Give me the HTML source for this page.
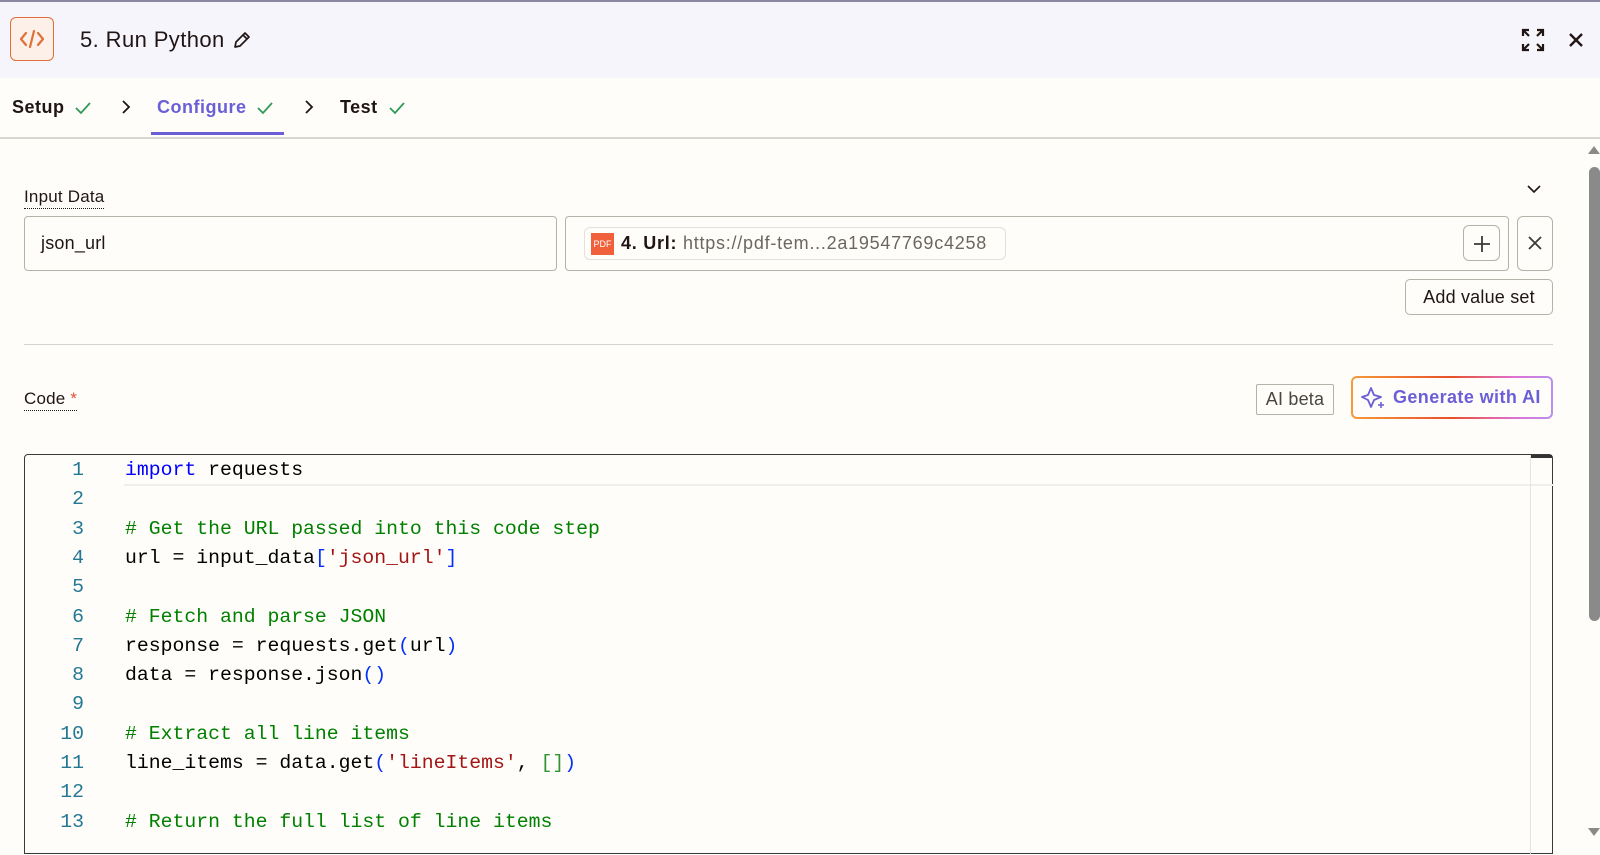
<!DOCTYPE html>
<html><head><meta charset="utf-8"><style>
*{box-sizing:border-box;margin:0;padding:0}
body{width:1600px;height:843px;overflow:hidden;background:#fffdf9;font-family:"Liberation Sans",sans-serif;color:#201515;position:relative;letter-spacing:0.2px}
.hdr{position:absolute;left:0;top:0;width:1600px;height:78px;background:#f6f5fb;border-top:2px solid #8a86a0}
.abs{position:absolute}
.btn{position:absolute;border:1px solid #b5b2aa;border-radius:4px;background:#fffdf9}
.code{position:absolute;left:24px;top:454px;width:1529px;height:400px;border:1.5px solid #3a3a3a;border-radius:4px 4px 0 0;background:#fffdf9}
.ln{position:absolute;left:0;width:60px;text-align:right;font-family:"Liberation Mono",monospace;font-size:19.8px;color:#237893;letter-spacing:0}
.cl{position:absolute;left:101px;font-family:"Liberation Mono",monospace;font-size:19.8px;color:#000;white-space:pre;letter-spacing:0}
.k{color:#0000ff}.c{color:#008000}.s{color:#a31515}.b{color:#0431fa}.g{color:#319331}
</style></head><body>
<div class="hdr">
 <div class="abs" style="left:10px;top:15px;width:44px;height:44px;border:1.5px solid #e0703a;border-radius:6px;background:#fdf0e8"></div>
 <svg class="abs" style="left:18px;top:25px" width="28" height="24" viewBox="0 0 28 24"><path d="M8 6 L3 12 L8 18 M20 6 L25 12 L20 18 M16 4 L12 20" stroke="#e0703a" stroke-width="2.2" fill="none" stroke-linecap="round" stroke-linejoin="round"/></svg>
 <div class="abs" style="left:80px;top:25px;font-size:22px;color:#201515;letter-spacing:0.4px">5. Run Python</div>
 <svg class="abs" style="left:232px;top:28px" width="20" height="20" viewBox="0 0 20 20"><path d="M3 17 L4 12 L13 3 L17 7 L8 16 Z M11 5 L15 9" stroke="#201515" stroke-width="1.7" fill="none" stroke-linejoin="round"/></svg>
 <svg class="abs" style="left:1521px;top:26px" width="24" height="24" viewBox="0 0 24 24"><path d="M2 8V2h6M2 2l6 6M22 8V2h-6M22 2l-6 6M2 16v6h6M2 22l6-6M22 16v6h-6M22 22l-6-6" stroke="#201515" stroke-width="2.2" fill="none"/></svg>
 <svg class="abs" style="left:1568px;top:30px" width="16" height="16" viewBox="0 0 16 16"><path d="M2 2L14 14M14 2L2 14" stroke="#201515" stroke-width="2.4"/></svg>
</div>
<div class="abs" style="left:12px;top:97px;font-size:18px;font-weight:bold;letter-spacing:0.5px">Setup</div>
<svg class="abs" style="left:74px;top:100px" width="18" height="16"><path d="M2 8l5 5 9-10" stroke="#2f9a58" stroke-width="1.8" fill="none"/></svg>
<svg class="abs" style="left:120px;top:99px" width="12" height="16"><path d="M3 2l6 6-6 6" stroke="#201515" stroke-width="1.8" fill="none"/></svg>
<div class="abs" style="left:157px;top:97px;font-size:18px;font-weight:bold;color:#6a5fd6;letter-spacing:0.5px">Configure</div>
<svg class="abs" style="left:256px;top:100px" width="18" height="16"><path d="M2 8l5 5 9-10" stroke="#2f9a58" stroke-width="1.8" fill="none"/></svg>
<div class="abs" style="left:151px;top:132px;width:133px;height:3px;background:#6a5fd6"></div>
<svg class="abs" style="left:303px;top:99px" width="12" height="16"><path d="M3 2l6 6-6 6" stroke="#201515" stroke-width="1.8" fill="none"/></svg>
<div class="abs" style="left:340px;top:97px;font-size:18px;font-weight:bold;letter-spacing:0.5px">Test</div>
<svg class="abs" style="left:388px;top:100px" width="18" height="16"><path d="M2 8l5 5 9-10" stroke="#2f9a58" stroke-width="1.8" fill="none"/></svg>
<div class="abs" style="left:0;top:137px;width:1600px;height:2px;background:#d8d6d0"></div>

<div class="abs" style="left:24px;top:187px;font-size:17px;border-bottom:1.5px dotted #201515;padding-bottom:1px">Input Data</div>
<svg class="abs" style="left:1526px;top:183px" width="16" height="12"><path d="M2 3l6 6 6-6" stroke="#201515" stroke-width="1.6" fill="none"/></svg>
<div class="btn" style="left:24px;top:216px;width:533px;height:55px"></div>
<div class="abs" style="left:41px;top:233px;font-size:18px">json_url</div>
<div class="btn" style="left:565px;top:216px;width:944px;height:55px"></div>
<div class="btn" style="left:584px;top:227px;width:422px;height:33px;border-color:#e2e0da;border-radius:6px"></div>
<div class="abs" style="left:591px;top:233px;width:23px;height:22px;background:#f0603a;color:#fff;font-size:9px;line-height:22px;text-align:center;letter-spacing:0">PDF</div>
<div class="abs" style="left:621px;top:233px;font-size:18px;letter-spacing:0.75px"><b>4. Url:</b> <span style="color:#6b6760">https://pdf-tem...2a19547769c4258</span></div>
<div class="btn" style="left:1463px;top:225px;width:37px;height:36px;border-radius:6px"></div>
<svg class="abs" style="left:1472px;top:234px" width="20" height="20"><path d="M10 2v16M2 10h16" stroke="#3a3a3a" stroke-width="1.8"/></svg>
<div class="btn" style="left:1517px;top:216px;width:36px;height:55px;border-radius:6px"></div>
<svg class="abs" style="left:1528px;top:236px" width="14" height="14"><path d="M1 1l12 12M13 1L1 13" stroke="#3a3a3a" stroke-width="1.8"/></svg>
<div class="btn" style="left:1405px;top:279px;width:148px;height:36px;border-radius:5px;font-size:18px;text-align:center;line-height:34px">Add value set</div>
<div class="abs" style="left:24px;top:344px;width:1529px;height:1px;background:#d4d2cc"></div>

<div class="abs" style="left:24px;top:389px;font-size:17px;border-bottom:1.5px dotted #201515;padding-bottom:1px">Code <span style="color:#e0503a">*</span></div>
<div class="btn" style="left:1256px;top:384px;width:78px;height:31px;border-radius:2px;font-size:18px;text-align:center;line-height:29px;color:#4a4640">AI beta</div>
<div class="abs" style="left:1351px;top:376px;width:202px;height:43px;border-radius:6px;background:linear-gradient(90deg,#f59a3a,#e8502a 50%,#e070d0 80%,#b890f0);padding:2px"><div style="width:100%;height:100%;background:#fffdf9;border-radius:4px"></div></div>
<svg class="abs" style="left:1361px;top:386px" width="26" height="24" viewBox="0 0 26 24"><path d="M10 2 L13 9 L20 11 L13 14 L10 21 L7 14 L1 11 L7 9 Z" stroke="#6a5fd6" stroke-width="1.8" fill="none" stroke-linejoin="round"/><path d="M20 16v6M17 19h6" stroke="#6a5fd6" stroke-width="1.6"/></svg>
<div class="abs" style="left:1393px;top:387px;font-size:18px;font-weight:bold;color:#6a5fd6;letter-spacing:0.4px">Generate with AI</div>

<div class="code">
 <div class="abs" style="left:99px;top:3px;width:1430px;height:28px;border-bottom:2px solid #eeeeee"></div>
 <div class="abs" style="left:1505px;top:0;width:22px;height:3px;background:#333"></div>
 <div class="abs" style="left:1505px;top:0;width:1px;height:400px;background:#e4e4e4"></div>
</div>
<div style="position:absolute;left:24px;top:459px">
<div class="ln" style="top:0">1</div><div class="cl" style="top:0"><span class="k">import</span> requests</div>
<div class="ln" style="top:29.3px">2</div>
<div class="ln" style="top:58.6px">3</div><div class="cl c" style="top:58.6px"># Get the URL passed into this code step</div>
<div class="ln" style="top:87.9px">4</div><div class="cl" style="top:87.9px">url = input_data<span class="b">[</span><span class="s">'json_url'</span><span class="b">]</span></div>
<div class="ln" style="top:117.2px">5</div>
<div class="ln" style="top:146.5px">6</div><div class="cl c" style="top:146.5px"># Fetch and parse JSON</div>
<div class="ln" style="top:175.8px">7</div><div class="cl" style="top:175.8px">response = requests.get<span class="b">(</span>url<span class="b">)</span></div>
<div class="ln" style="top:205.1px">8</div><div class="cl" style="top:205.1px">data = response.json<span class="b">()</span></div>
<div class="ln" style="top:234.4px">9</div>
<div class="ln" style="top:263.7px">10</div><div class="cl c" style="top:263.7px"># Extract all line items</div>
<div class="ln" style="top:293px">11</div><div class="cl" style="top:293px">line_items = data.get<span class="b">(</span><span class="s">'lineItems'</span>, <span class="g">[]</span><span class="b">)</span></div>
<div class="ln" style="top:322.3px">12</div>
<div class="ln" style="top:351.6px">13</div><div class="cl c" style="top:351.6px"># Return the full list of line items</div>
</div>

<div class="abs" style="left:1588px;top:146px;width:0;height:0;border-left:6px solid transparent;border-right:6px solid transparent;border-bottom:8px solid #8a8a8a"></div>
<div class="abs" style="left:1589px;top:167px;width:11px;height:454px;border-radius:6px;background:#8a8a8a"></div>
<div class="abs" style="left:1588px;top:828px;width:0;height:0;border-left:6px solid transparent;border-right:6px solid transparent;border-top:8px solid #8a8a8a"></div>
</body></html>
